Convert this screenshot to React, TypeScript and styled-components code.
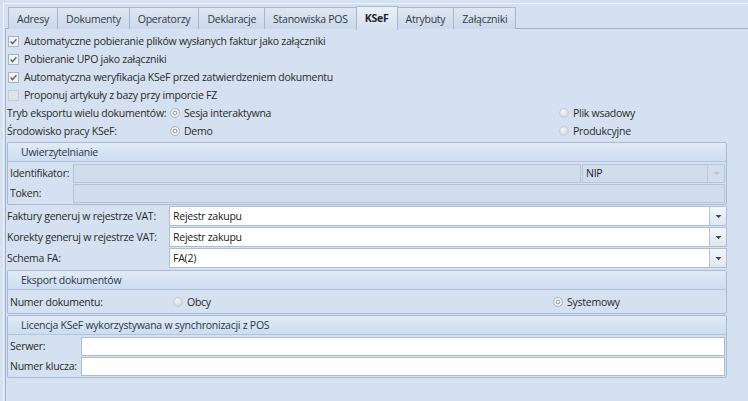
import * as React from 'react';
import styled, { createGlobalStyle, css } from 'styled-components';

const GlobalStyle = createGlobalStyle`
  html, body {
    margin: 0;
    padding: 0;
    background: #d5e0f0;
  }
  body {
    font-family: "Open Sans", "Noto Sans", sans-serif;
    font-size: 10.5px;
    letter-spacing: -0.25px;
    color: #2a2a2a;
  }
  * { box-sizing: border-box; }
`;

const tabs = ['Adresy', 'Dokumenty', 'Operatorzy', 'Deklaracje', 'Stanowiska POS', 'KSeF', 'Atrybuty', 'Załączniki'];

const CheckMark = ({ checked }: { checked: boolean }) => (
    <svg width="11" height="11" viewBox="0 0 11 11">
        <rect x="0.5" y="0.5" width="10" height="10" fill={checked ? '#f1f3f6' : '#dfe4ea'} stroke={checked ? '#aab3bf' : '#c4ccd6'} />
        {checked && <path d="M2.6 5.6 L4.5 7.6 L8.4 3.2" fill="none" stroke="#5b6470" strokeWidth="1.4" />}
    </svg>
);

const RadioMark = ({ checked }: { checked: boolean }) => (
    <svg width="10" height="10" viewBox="0 0 10 10">
        <defs>
            <radialGradient id="rg" cx="0.4" cy="0.35" r="0.7">
                <stop offset="0" stopColor="#f4f6f9" />
                <stop offset="1" stopColor="#cfd5dd" />
            </radialGradient>
        </defs>
        {checked ? (
            <>
                <circle cx="5" cy="5" r="4.4" fill="#f6f8fb" stroke="#9ea8b5" strokeWidth="0.9" />
                <circle cx="5" cy="5" r="1.9" fill="#ffffff" stroke="#7f8a99" strokeWidth="0.9" />
            </>
        ) : (
            <circle cx="5" cy="5" r="4.4" fill="url(#rg)" stroke="#c3cad3" strokeWidth="0.9" />
        )}
    </svg>
);

const Arrow = ({ disabled }: { disabled?: boolean }) => (
    <svg width="7" height="5" viewBox="0 0 7 5">
        <path d="M0.5 1 L6.5 1 L3.5 4.2 Z" fill={disabled ? '#b9c3cf' : '#3e4854'} />
    </svg>
);

export default function App() {
    return (
        <>
            <GlobalStyle />
            <Frame>
                <TabStrip>
                    {tabs.map(t => (
                        <Tab key={t} $active={t === 'KSeF'}>{t}</Tab>
                    ))}
                </TabStrip>
                <Panel>
                    <CheckRow><CheckMark checked /><span>Automatyczne pobieranie plików wysłanych faktur jako załączniki</span></CheckRow>
                    <CheckRow><CheckMark checked /><span>Pobieranie UPO jako załączniki</span></CheckRow>
                    <CheckRow><CheckMark checked /><span>Automatyczna weryfikacja KSeF przed zatwierdzeniem dokumentu</span></CheckRow>
                    <CheckRow><CheckMark checked={false} /><span>Proponuj artykuły z bazy przy imporcie FZ</span></CheckRow>

                    <OptionRow $cols="162px 389px 1fr">
                        <Label>Tryb eksportu wielu dokumentów:</Label>
                        <Option><RadioMark checked /><span>Sesja interaktywna</span></Option>
                        <Option><RadioMark checked={false} /><span>Plik wsadowy</span></Option>
                    </OptionRow>
                    <OptionRow $cols="162px 389px 1fr">
                        <Label>Środowisko pracy KSeF:</Label>
                        <Option><RadioMark checked /><span>Demo</span></Option>
                        <Option><RadioMark checked={false} /><span>Produkcyjne</span></Option>
                    </OptionRow>

                    <Group $top={2}>
                        <GroupHeader>Uwierzytelnianie</GroupHeader>
                        <GroupBody>
                            <InputRow $label={65}>
                                <Label $inGroup>Identifikator:</Label>
                                <Split>
                                    <Input $disabled />
                                    <Combo $width={143} $disabled>
                                        <Value>NIP</Value>
                                        <ArrowButton $disabled><Arrow disabled /></ArrowButton>
                                    </Combo>
                                </Split>
                            </InputRow>
                            <InputRow $label={65}>
                                <Label $inGroup>Token:</Label>
                                <Input $disabled />
                            </InputRow>
                        </GroupBody>
                    </Group>

                    <Fields>
                        <InputRow $label={162}>
                            <Label>Faktury generuj w rejestrze VAT:</Label>
                            <Combo>
                                <Value>Rejestr zakupu</Value>
                                <ArrowButton><Arrow /></ArrowButton>
                            </Combo>
                        </InputRow>
                        <InputRow $label={162}>
                            <Label>Korekty generuj w rejestrze VAT:</Label>
                            <Combo>
                                <Value>Rejestr zakupu</Value>
                                <ArrowButton><Arrow /></ArrowButton>
                            </Combo>
                        </InputRow>
                        <InputRow $label={162}>
                            <Label>Schema FA:</Label>
                            <Combo>
                                <Value>FA(2)</Value>
                                <ArrowButton><Arrow /></ArrowButton>
                            </Combo>
                        </InputRow>
                    </Fields>

                    <Group $top={2}>
                        <GroupHeader>Eksport dokumentów</GroupHeader>
                        <GroupBody>
                            <OptionRow $cols="164px 380px 1fr" $height={21}>
                                <Label $inGroup>Numer dokumentu:</Label>
                                <Option><RadioMark checked={false} /><span>Obcy</span></Option>
                                <Option><RadioMark checked /><span>Systemowy</span></Option>
                            </OptionRow>
                        </GroupBody>
                    </Group>

                    <Group $top={1}>
                        <GroupHeader>Licencja KSeF wykorzystywana w synchronizacji z POS</GroupHeader>
                        <GroupBody>
                            <InputRow $label={73}>
                                <Label $inGroup>Serwer:</Label>
                                <Input />
                            </InputRow>
                            <InputRow $label={73}>
                                <Label $inGroup>Numer klucza:</Label>
                                <Input />
                            </InputRow>
                        </GroupBody>
                    </Group>
                </Panel>
            </Frame>
        </>
    );
}

const Frame = styled.div`
    margin: 3px 0 0 3px;
    height: 398px;
    border-top: 1px solid #eef3fa;
    border-left: 1px solid #eef3fa;
    display: flex;
    flex-direction: column;
    overflow: hidden;
`;

const TabStrip = styled.div`
    display: flex;
    align-items: flex-end;
    height: 25px;
    padding-left: 5px;
    position: relative;
    z-index: 1;
    margin-bottom: -1px;
`;

const Tab = styled.div<{ $active?: boolean }>`
    height: 22px;
    padding: 0 8px;
    margin-left: -1px;
    display: flex;
    align-items: center;
    border: 1px solid #a6b7cf;
    border-bottom: none;
    background: linear-gradient(#dfe7f2, #cbd8ea);
    color: #2f3a48;
    white-space: nowrap;
    ${p => p.$active && css`
        height: 24px;
        margin-bottom: -1px;
        padding-bottom: 1px;
        background: linear-gradient(#eaf0f8, #d5e0f0);
        font-weight: 700;
        color: #1f2630;
        position: relative;
    `}
`;

const Panel = styled.div`
    flex: 1;
    margin-left: 1px;
    border-left: 1px solid #9fb3cd;
    border-top: 1px solid #9fb3cd;
    background: #d5e0f0;
    padding: 3px 21px 0 1px;
`;

const CheckRow = styled.div`
    height: 18px;
    display: flex;
    align-items: center;
    gap: 5px;
    padding-left: 1px;
    white-space: nowrap;
`;

const OptionRow = styled.div<{ $cols: string; $height?: number }>`
    display: grid;
    grid-template-columns: ${p => p.$cols};
    align-items: center;
    height: ${p => p.$height ?? 18}px;
    white-space: nowrap;
`;

const Label = styled.div<{ $inGroup?: boolean }>`
    padding-left: ${p => (p.$inGroup ? 2 : 0)}px;
    white-space: nowrap;
`;

const Option = styled.div`
    display: flex;
    align-items: center;
    gap: 4px;
    padding-left: 1px;
`;

const Group = styled.div<{ $top: number }>`
    margin-top: ${p => p.$top}px;
    border: 1px solid #a8bad3;
    border-radius: 2px;
    overflow: hidden;
`;

const GroupHeader = styled.div`
    height: 19px;
    padding-left: 13px;
    display: flex;
    align-items: center;
    background: linear-gradient(#e1eaf7, #cddcf0);
    border-bottom: 1px solid #b3c4dc;
    color: #2c3744;
`;

const GroupBody = styled.div`
    padding: 1px 1px 1px 0;
    display: flex;
    flex-direction: column;
`;

const Fields = styled.div`
    margin-top: 1px;
    display: flex;
    flex-direction: column;
    gap: 1px;
`;

const InputRow = styled.div<{ $label: number }>`
    display: grid;
    grid-template-columns: ${p => p.$label}px 1fr;
    align-items: center;
    height: 20px;
`;

const Split = styled.div`
    display: flex;
    gap: 1px;
    height: 19px;
`;

const Input = styled.div<{ $disabled?: boolean }>`
    flex: 1;
    height: 19px;
    border: 1px solid ${p => (p.$disabled ? '#b6c4d8' : '#adbdd4')};
    background: ${p => (p.$disabled ? '#d1ddec' : '#ffffff')};
`;

const Combo = styled.div<{ $width?: number; $disabled?: boolean }>`
    display: flex;
    height: ${p => (p.$disabled ? 19 : 20)}px;
    ${p => p.$width && css`width: ${p.$width}px;`}
    border: 1px solid ${p => (p.$disabled ? '#b6c4d8' : '#adbdd4')};
    background: ${p => (p.$disabled ? '#d1ddec' : '#ffffff')};
    color: ${p => (p.$disabled ? '#1c1c1c' : '#202020')};
`;

const Value = styled.div`
    flex: 1;
    display: flex;
    align-items: center;
    padding-left: 3px;
`;

const ArrowButton = styled.div<{ $disabled?: boolean }>`
    width: 17px;
    display: flex;
    align-items: center;
    justify-content: center;
    border-left: 1px solid ${p => (p.$disabled ? '#bcc9db' : '#b3c2d7')};
    background: ${p => (p.$disabled ? '#d3deed' : 'linear-gradient(#f3f6fb, #dfe7f2)')};
`;
